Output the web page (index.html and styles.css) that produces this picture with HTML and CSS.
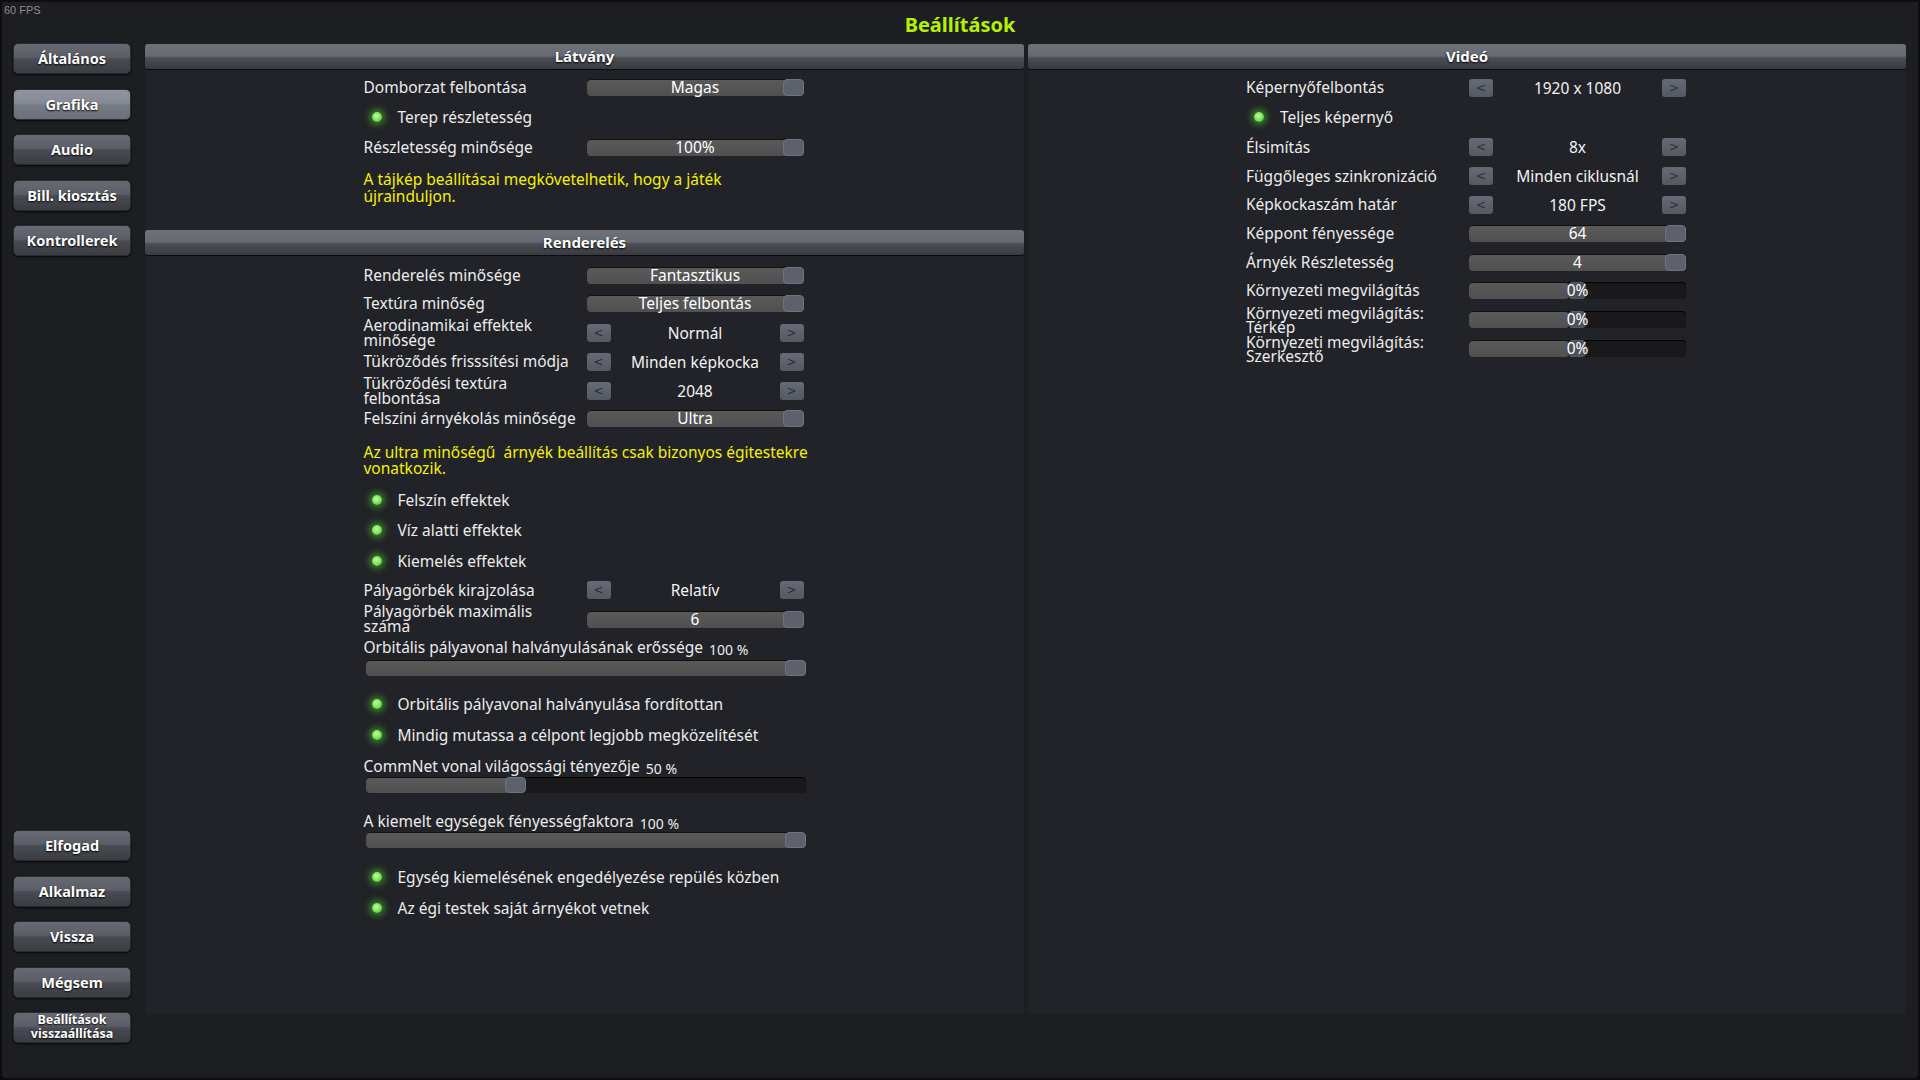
FILE: index.html
```html
<!DOCTYPE html>
<html lang="hu">
<head>
<meta charset="utf-8">
<title>Beállítások</title>
<link rel="stylesheet" href="styles.css">
</head>
<body>
<div class="window">
  <div class="fps">60 FPS</div>
  <div class="title">Beállítások</div>
  <div class="main">
    <nav class="sidebar">
      <div class="btn-group">
        <div class="nav-btn">Általános</div>
        <div class="nav-btn active">Grafika</div>
        <div class="nav-btn">Audio</div>
        <div class="nav-btn">Bill. kiosztás</div>
        <div class="nav-btn">Kontrollerek</div>
      </div>
      <div class="btn-group">
        <div class="nav-btn">Elfogad</div>
        <div class="nav-btn">Alkalmaz</div>
        <div class="nav-btn">Vissza</div>
        <div class="nav-btn">Mégsem</div>
        <div class="nav-btn small">Beállítások<br>visszaállítása</div>
      </div>
    </nav>
    <div class="content">
      <section class="col">
        <div class="header">Látvány</div>
        <div class="form first">
          <div class="row h29">
            <div class="label">Domborzat felbontása</div>
            <div class="slider"><div class="fill" style="width:100%"></div><div class="knob" style="left:196px"></div><div class="slider-text">Magas</div></div>
          </div>
          <div class="row h30 led-row"><span class="led"></span><span class="led-label">Terep részletesség</span></div>
          <div class="row h31">
            <div class="label">Részletesség minősége</div>
            <div class="slider"><div class="fill" style="width:100%"></div><div class="knob" style="left:196px"></div><div class="slider-text">100%</div></div>
          </div>
          <p class="note">A tájkép beállításai megkövetelhetik, hogy a játék újrainduljon.</p>
        </div>
        <div class="header">Renderelés</div>
        <div class="form second">
          <div class="row h28">
            <div class="label">Renderelés minősége</div>
            <div class="slider"><div class="fill" style="width:100%"></div><div class="knob" style="left:196px"></div><div class="slider-text">Fantasztikus</div></div>
          </div>
          <div class="row h29">
            <div class="label">Textúra minőség</div>
            <div class="slider"><div class="fill" style="width:100%"></div><div class="knob" style="left:196px"></div><div class="slider-text">Teljes felbontás</div></div>
          </div>
          <div class="row h29">
            <div class="label">Aerodinamikai effektek minősége</div>
            <div class="stepper"><span class="arrow">&lt;</span><span class="value">Normál</span><span class="arrow">&gt;</span></div>
          </div>
          <div class="row h29">
            <div class="label wide">Tükröződés frisssítési módja</div>
            <div class="stepper"><span class="arrow">&lt;</span><span class="value">Minden képkocka</span><span class="arrow">&gt;</span></div>
          </div>
          <div class="row h29">
            <div class="label">Tükröződési textúra felbontása</div>
            <div class="stepper"><span class="arrow">&lt;</span><span class="value">2048</span><span class="arrow">&gt;</span></div>
          </div>
          <div class="row h27">
            <div class="label wide">Felszíni árnyékolás minősége</div>
            <div class="slider"><div class="fill" style="width:100%"></div><div class="knob" style="left:196px"></div><div class="slider-text">Ultra</div></div>
          </div>
          <p class="note note2">Az ultra minőségű&nbsp; árnyék beállítás csak bizonyos égitestekre vonatkozik.</p>
          <div class="row h28 led-row gap-top"><span class="led"></span><span class="led-label">Felszín effektek</span></div>
          <div class="row h31 led-row"><span class="led"></span><span class="led-label">Víz alatti effektek</span></div>
          <div class="row h31 led-row"><span class="led"></span><span class="led-label">Kiemelés effektek</span></div>
          <div class="row h28">
            <div class="label">Pályagörbék kirajzolása</div>
            <div class="stepper"><span class="arrow">&lt;</span><span class="value">Relatív</span><span class="arrow">&gt;</span></div>
          </div>
          <div class="row h30">
            <div class="label">Pályagörbék maximális száma</div>
            <div class="slider"><div class="fill" style="width:100%"></div><div class="knob" style="left:196px"></div><div class="slider-text">6</div></div>
          </div>
          <div class="row h26"><div class="label full">Orbitális pályavonal halványulásának erőssége <span class="pct">100 %</span></div></div>
          <div class="slider long"><div class="fill" style="width:100%"></div><div class="knob" style="left:419px"></div></div>
          <div class="row h31 led-row gap-top-s"><span class="led"></span><span class="led-label">Orbitális pályavonal halványulása fordítottan</span></div>
          <div class="row h31 led-row"><span class="led"></span><span class="led-label">Mindig mutassa a célpont legjobb megközelítését</span></div>
          <div class="row h22 gap-label"><div class="label full">CommNet vonal világossági tényezője <span class="pct">50 %</span></div></div>
          <div class="slider long"><div class="fill" style="width:33%"></div><div class="knob" style="left:139px"></div></div>
          <div class="row h22 gap-label2"><div class="label full">A kiemelt egységek fényességfaktora <span class="pct">100 %</span></div></div>
          <div class="slider long"><div class="fill" style="width:100%"></div><div class="knob" style="left:419px"></div></div>
          <div class="row h31 led-row gap-top-m"><span class="led"></span><span class="led-label">Egység kiemelésének engedélyezése repülés közben</span></div>
          <div class="row h31 led-row"><span class="led"></span><span class="led-label">Az égi testek saját árnyékot vetnek</span></div>
        </div>
      </section>
      <section class="col">
        <div class="header">Videó</div>
        <div class="form first">
          <div class="row h29">
            <div class="label">Képernyőfelbontás</div>
            <div class="stepper"><span class="arrow">&lt;</span><span class="value">1920 x 1080</span><span class="arrow">&gt;</span></div>
          </div>
          <div class="row h30 led-row"><span class="led"></span><span class="led-label">Teljes képernyő</span></div>
          <div class="row h30">
            <div class="label">Élsimítás</div>
            <div class="stepper"><span class="arrow">&lt;</span><span class="value">8x</span><span class="arrow">&gt;</span></div>
          </div>
          <div class="row h28">
            <div class="label wide">Függőleges szinkronizáció</div>
            <div class="stepper"><span class="arrow">&lt;</span><span class="value">Minden ciklusnál</span><span class="arrow">&gt;</span></div>
          </div>
          <div class="row h29">
            <div class="label">Képkockaszám határ</div>
            <div class="stepper"><span class="arrow">&lt;</span><span class="value">180 FPS</span><span class="arrow">&gt;</span></div>
          </div>
          <div class="row h29">
            <div class="label">Képpont fényessége</div>
            <div class="slider"><div class="fill" style="width:100%"></div><div class="knob" style="left:196px"></div><div class="slider-text">64</div></div>
          </div>
          <div class="row h28">
            <div class="label">Árnyék Részletesség</div>
            <div class="slider"><div class="fill" style="width:100%"></div><div class="knob" style="left:196px"></div><div class="slider-text">4</div></div>
          </div>
          <div class="row h29">
            <div class="label">Környezeti megvilágítás</div>
            <div class="slider"><div class="fill" style="width:46%"></div><div class="knob mid" style="left:99px"></div><div class="slider-text">0%</div></div>
          </div>
          <div class="row h29">
            <div class="label tight">Környezeti megvilágítás: Térkép</div>
            <div class="slider"><div class="fill" style="width:46%"></div><div class="knob mid" style="left:99px"></div><div class="slider-text">0%</div></div>
          </div>
          <div class="row h29">
            <div class="label tight">Környezeti megvilágítás: Szerkesztő</div>
            <div class="slider"><div class="fill" style="width:46%"></div><div class="knob mid" style="left:99px"></div><div class="slider-text">0%</div></div>
          </div>
        </div>
      </section>
    </div>
  </div>
</div>
</body>
</html>
```
FILE: styles.css
```css
html, body {
  margin: 0;
  padding: 0;
  background: #0b0b0c;
}
body {
  font-family: "Noto Sans", "Open Sans", sans-serif;
  color: #ececec;
}
.window {
  position: relative;
  width: 1920px;
  height: 1080px;
  box-sizing: border-box;
  border: 2px solid #0d0d0f;
  border-radius: 0 0 6px 6px;
  background: #1d1e22;
  display: flex;
  flex-direction: column;
}
.fps {
  position: absolute;
  left: 2px;
  top: 2px;
  font-family: "Liberation Sans", Arial, sans-serif;
  font-size: 11px;
  color: #8c8c8c;
}
.title {
  height: 42px;
  line-height: 46px;
  text-align: center;
  color: #b4f000;
  font-weight: 700;
  font-size: 20px;
}
.main {
  flex: 1;
  display: flex;
}
.sidebar {
  width: 132px;
  padding-left: 11px;
  padding-bottom: 35px;
  display: flex;
  flex-direction: column;
  justify-content: space-between;
}
.btn-group {
  display: flex;
  flex-direction: column;
  gap: 14.5px;
}
.btn-group:first-child {
  margin-top: -1px;
}
.nav-btn {
  width: 118px;
  height: 31px;
  box-sizing: border-box;
  border: 1px solid #2a2b30;
  border-radius: 5px;
  background: linear-gradient(#676a72 0%, #5b5e66 45%, #484b52 52%, #3b3d43 100%);
  box-shadow: 0 1px 2px rgba(0,0,0,0.8);
  color: #fff;
  font-weight: 700;
  font-size: 14.5px;
  text-align: center;
  line-height: 29px;
  text-shadow: 0 1px 2px #000;
}
.nav-btn.active {
  background: linear-gradient(#9194a0 0%, #868a95 45%, #767a85 52%, #6c707a 100%);
}
.nav-btn.small {
  font-size: 12.5px;
  line-height: 14px;
  padding-top: 0;
}
.content {
  width: 1761px;
  height: 971px;
  display: flex;
  gap: 4px;
}
.col {
  flex: 1;
  display: flex;
  flex-direction: column;
  background: #222328;
  border-radius: 0 0 4px 4px;
}
.col:first-child {
  flex: 0 0 879px;
}
.header {
  height: 25px;
  flex: 0 0 25px;
  border-radius: 3px;
  background: linear-gradient(#6e727b 0%, #656972 48%, #4a4d54 56%, #393b41 100%);
  box-shadow: 0 1px 1px rgba(0,0,0,0.7);
  color: #fff;
  font-weight: 700;
  font-size: 15px;
  line-height: 25px;
  text-align: center;
  text-shadow: 0 1px 2px #000;
}
.form {
  width: 442px;
  margin: 0 auto;
  display: flex;
  flex-direction: column;
}
.form.first {
  padding-top: 4px;
  padding-bottom: 25px;
}
.form.second {
  padding-top: 6px;
}
.row {
  display: flex;
  align-items: center;
}
.h22 { height: 22px; }
.h26 { height: 26px; }
.h27 { height: 27px; }
.h28 { height: 28px; }
.h29 { height: 29px; }
.h30 { height: 30px; }
.h31 { height: 31px; }
.label {
  width: 213px;
  flex: 0 0 213px;
  margin-right: 10px;
  font-size: 15.5px;
  line-height: 15px;
  color: #ececec;
}
.label.tight {
  line-height: 14px;
}
.label.wide {
  white-space: nowrap;
}
.label.full {
  width: auto;
  flex: 1;
  margin-right: 0;
  white-space: nowrap;
}
.pct {
  font-size: 14px;
  position: relative;
  top: 2px;
  margin-left: 2px;
}
.slider {
  position: relative;
  width: 217px;
  height: 17px;
  flex: 0 0 auto;
  border-radius: 4px;
  background: #19191c;
  box-shadow: inset 0 1px 1px #000;
}
.slider.long {
  width: 440px;
  height: 16px;
  margin-left: 2px;
}
.fill {
  height: 100%;
  border-radius: 4px;
  background: linear-gradient(#5a5a5b, #505051);
  box-shadow: inset 0 1px 0 #111;
}
.knob {
  position: absolute;
  top: 0;
  width: 21px;
  height: 100%;
  box-sizing: border-box;
  border: 1px solid #6e737d;
  border-radius: 4px;
  background: #5c616b;
}
.knob.mid {
  width: 18px;
  border-color: #555a63;
  background: #4d515a;
}
.slider-text {
  position: absolute;
  left: 0;
  right: 0;
  top: 0;
  bottom: 0;
  text-align: center;
  font-size: 15.5px;
  line-height: 17px;
  color: #fff;
}
.stepper {
  width: 217px;
  display: flex;
  align-items: center;
}
.arrow {
  width: 24px;
  height: 18px;
  border-radius: 3px;
  background: linear-gradient(#666a74, #555962);
  color: #2c2e33;
  font-family: "DejaVu Sans", sans-serif;
  font-size: 12px;
  line-height: 19px;
  text-align: center;
}
.value {
  flex: 1;
  text-align: center;
  font-size: 15.5px;
  color: #f2f2f2;
}
.led-row {
  padding-left: 8px;
}
.led {
  width: 10px;
  height: 10px;
  border-radius: 50%;
  background: radial-gradient(circle at 45% 40%, #d4ffb0 0%, #7ee85a 45%, #45b52a 100%);
  box-shadow: 0 0 6px 3px rgba(80, 220, 40, 0.5);
  margin-right: 16px;
}
.led-label {
  font-size: 15.5px;
  color: #ececec;
}
.note {
  margin: 8px 0 0;
  font-size: 15.5px;
  line-height: 17px;
  color: #f5f000;
}
.note.note2 {
  margin-top: 13px;
  margin-right: -12px;
  line-height: 15.5px;
}
.gap-top { margin-top: 10px; }
.gap-top-s { margin-top: 12px; }
.gap-label { margin-top: 5px; }
.gap-label2 { margin-top: 17px; }
.gap-top-m { margin-top: 13px; }
```
